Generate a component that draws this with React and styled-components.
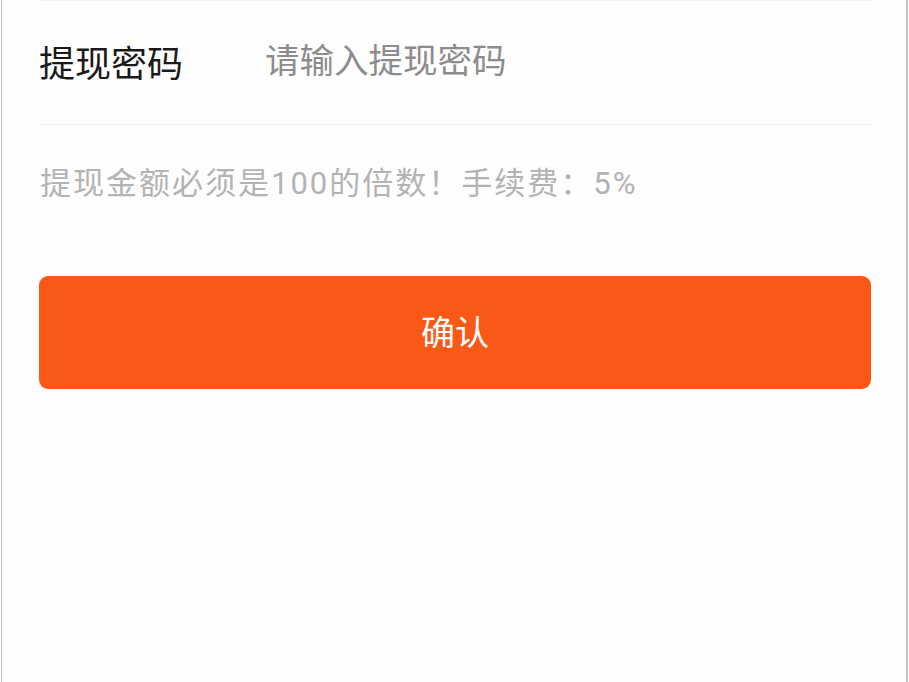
import React from "react";
import styled, { createGlobalStyle } from "styled-components";

const GlobalStyle = createGlobalStyle`
  html, body {
    margin: 0;
    padding: 0;
    background: #ffffff;
  }
  body {
    font-family: Roboto, "Noto Sans CJK SC", "Noto Sans", sans-serif;
  }
`;

const Page = styled.div`
  box-sizing: border-box;
  width: 907px;
  height: 682px;
  margin-left: 1px;
  border-left: 1px solid #c4c4c4;
  border-right: 2px solid #c4c4c4;
  background: #fefefe;
  padding: 0 36px 0 37px;
`;

const Row = styled.div`
  display: flex;
  align-items: center;
  height: 125px;
  margin: 0 0 0 2px;
  border-top: 1px solid #f2f2f2;
  border-bottom: 1px solid #f0f0f0;
  box-sizing: border-box;
`;

const Label = styled.span`
  width: 226px;
  font-size: 36px;
  color: #1a1a1a;
  flex-shrink: 0;
  margin-left: -2px;
  margin-top: -4px;
`;

const Input = styled.input`
  flex: 1;
  border: none;
  outline: none;
  background: transparent;
  font-family: inherit;
  font-size: 34.5px;
  color: #333;
  padding: 0;
  margin-top: -4px;

  &::placeholder {
    color: #8c8c8c;
  }
`;

const Hint = styled.p`
  margin: 0;
  padding: 41px 0 0 1px;
  font-size: 31px;
  letter-spacing: 2px;
  line-height: 36px;
  color: #b3b3b3;
`;

const Button = styled.button`
  display: block;
  width: 832px;
  height: 113px;
  margin-top: 74px;
  border: none;
  border-radius: 9px;
  background: #fa5816;
  color: #ffffff;
  font-family: inherit;
  font-size: 34px;
  padding: 0 0 4px;
  cursor: pointer;
`;

const App = () => {
  return (
    <>
      <GlobalStyle />
      <Page>
        <Row>
          <Label>提现密码</Label>
          <Input type="password" placeholder="请输入提现密码" />
        </Row>
        <Hint>提现金额必须是100的倍数！手续费：5%</Hint>
        <Button>确认</Button>
      </Page>
    </>
  );
};

export default App;
